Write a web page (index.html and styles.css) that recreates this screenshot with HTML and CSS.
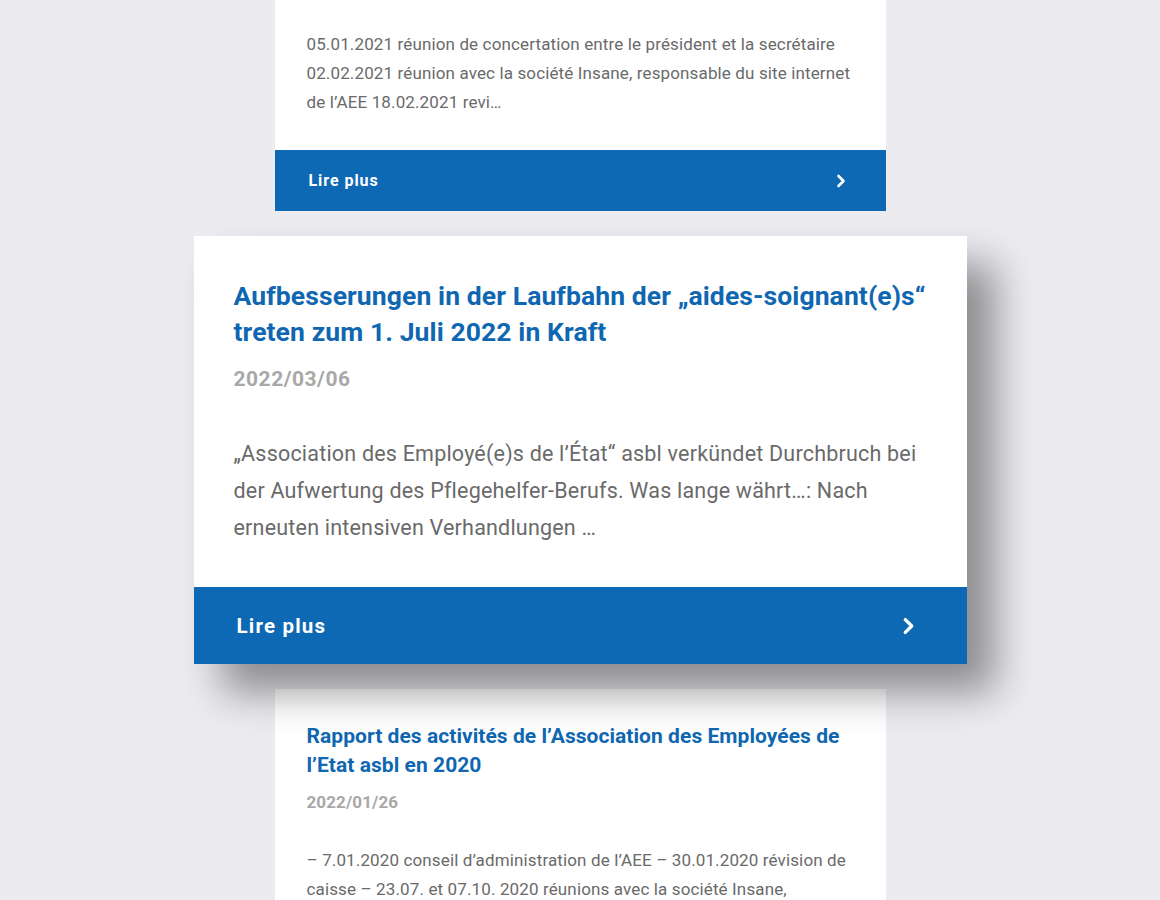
FILE: index.html
```html
<!DOCTYPE html>
<html lang="fr">
<head>
<meta charset="utf-8">
<title>Actualités</title>
<link rel="stylesheet" href="styles.css">
</head>
<body>
<main class="list">
  <article class="card card-small card-cut">
    <p class="excerpt">05.01.2021 réunion de concertation entre le président et la secrétaire 02.02.2021 réunion avec la société Insane, responsable du site internet de l’AEE 18.02.2021 revi…</p>
    <a class="more" href="#"><span>Lire plus</span><svg class="chev" viewBox="0 0 10 14" aria-hidden="true"><polyline points="2.5,2 7.5,7 2.5,12"/></svg></a>
  </article>

  <article class="card card-big">
    <h2 class="title">Aufbesserungen in der Laufbahn der „aides-soignant(e)s“ treten zum 1. Juli 2022 in Kraft</h2>
    <div class="date">2022/03/06</div>
    <p class="excerpt">„Association des Employé(e)s de l’État“ asbl verkündet Durchbruch bei der Aufwertung des Pflegehelfer-Berufs. Was lange währt…: Nach erneuten intensiven Verhandlungen …</p>
    <a class="more" href="#"><span>Lire plus</span><svg class="chev" viewBox="0 0 10 14" aria-hidden="true"><polyline points="2.5,2 7.5,7 2.5,12"/></svg></a>
  </article>

  <article class="card card-small">
    <h2 class="title">Rapport des activités de l’Association des Employées de l’Etat asbl en 2020</h2>
    <div class="date">2022/01/26</div>
    <p class="excerpt">– 7.01.2020 conseil d’administration de l’AEE – 30.01.2020 révision de caisse – 23.07. et 07.10. 2020 réunions avec la société Insane, responsable du site internet de l’AEE …</p>
  </article>
</main>
</body>
</html>
```

FILE: styles.css
```css
html, body {
  margin: 0;
  padding: 0;
  height: 100%;
  overflow: hidden;
}
body {
  background: #ebebf0;
  font-family: Roboto, "Liberation Sans", Arial, sans-serif;
}
.list {
  display: flex;
  flex-direction: column;
  align-items: center;
  gap: 25px;
}
.card {
  background: #ffffff;
  display: flex;
  flex-direction: column;
}
.card p, .card h2 { margin: 0; }

.title {
  color: #0f67b1;
  font-weight: 700;
}
.date {
  color: #a8a8a8;
  font-weight: 700;
}
.excerpt {
  color: #6a6a6a;
  font-weight: 400;
}
.more {
  display: flex;
  align-items: center;
  justify-content: space-between;
  background: #0e69b5;
  color: #ffffff;
  text-decoration: none;
  font-weight: 700;
}
.chev {
  fill: none;
  stroke: #ffffff;
  stroke-width: 2.6;
  stroke-linecap: round;
  stroke-linejoin: round;
}

/* small cards */
.card-small {
  width: 611px;
}
.card-small .title {
  font-size: 21px;
  line-height: 29px;
  padding: 33px 32px 0;
  letter-spacing: 0.05px;
}
.card-small .date {
  font-size: 17px;
  line-height: 24px;
  margin-top: 10px;
  padding: 0 32px;
  letter-spacing: 0.1px;
}
.card-small .excerpt {
  font-size: 17px;
  line-height: 29px;
  padding: 32px 32px 34px;
  letter-spacing: 0.13px;
}
.card-cut .excerpt {
  padding-top: 30px;
  padding-bottom: 33px;
}
.card-small .more {
  height: 61px;
  padding: 0 40px 0 34px;
  font-size: 16px;
  letter-spacing: 0.95px;
}
.card-small .chev {
  width: 10px;
  height: 14px;
}

/* featured card */
.card-big {
  width: 773px;
  position: relative;
  z-index: 1;
  box-shadow: 28px 28px 38px rgba(0, 0, 0, 0.4);
}
.card-big .title {
  font-size: 26.5px;
  line-height: 36px;
  padding: 42px 40px 0;
  letter-spacing: 0.1px;
}
.card-big .date {
  font-size: 21px;
  line-height: 30px;
  margin-top: 14px;
  padding: 0 40px;
  letter-spacing: 0.5px;
}
.card-big .excerpt {
  font-size: 21.5px;
  line-height: 37px;
  padding: 41px 40px 41px;
  letter-spacing: 0.2px;
}
.card-big .more {
  height: 77px;
  padding: 0 52px 0 43px;
  font-size: 20.5px;
  letter-spacing: 1.2px;
}
.card-big .chev {
  width: 13px;
  height: 18px;
}
```
